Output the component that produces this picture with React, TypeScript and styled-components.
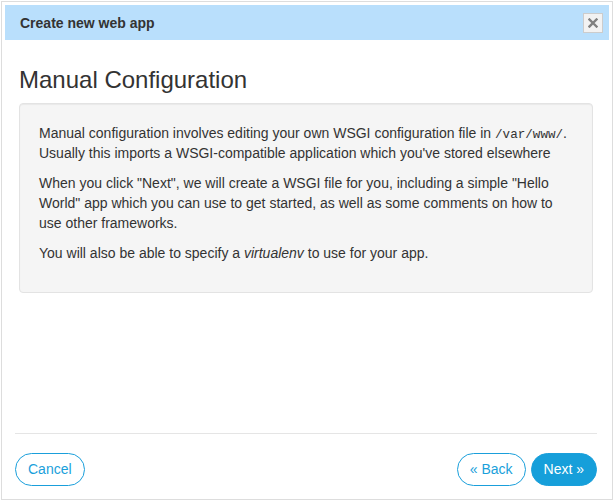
import React from "react";
import styled, { createGlobalStyle } from "styled-components";

const Global = createGlobalStyle`
  html, body { margin: 0; padding: 0; background: #fff; }
  body { font-family: "Liberation Sans", Arial, sans-serif; color: #333; }
  * { box-sizing: border-box; }
`;

const Page = styled.div`
  padding: 1px;
`;

const Dialog = styled.div`
  width: 612px;
  height: 499px;
  border: 1px solid #dddddd;
  padding: 3px;
  display: flex;
  flex-direction: column;
  background: #fff;
`;

const TitleBar = styled.div`
  height: 35px;
  background: #b9dffc;
  display: flex;
  align-items: center;
  justify-content: space-between;
  padding: 0 6px 0 15px;
`;

const Title = styled.span`
  font-size: 14px;
  font-weight: bold;
  color: #333;
`;

const CloseButton = styled.button`
  width: 20px;
  height: 20px;
  padding: 0;
  margin: 0;
  border: 1px solid #cccccc;
  background: #f2f2f2;
  display: flex;
  align-items: center;
  justify-content: center;
  cursor: pointer;
`;

const Content = styled.div`
  flex: 1;
  padding: 7px 16px 0 14px;
`;

const Heading = styled.h3`
  margin: 20px 0 10px;
  font-size: 24px;
  font-weight: normal;
  line-height: 1.1;
  color: #333;
`;

const Well = styled.div`
  background: #f5f5f5;
  border: 1px solid #e3e3e3;
  border-radius: 4px;
  box-shadow: inset 0 1px 1px rgba(0, 0, 0, 0.05);
  padding: 19px;
`;

const Para = styled.p`
  margin: 0 0 10px;
  font-size: 14px;
  line-height: 20px;
  color: #333;
`;

const Code = styled.code`
  font-family: "Liberation Mono", "DejaVu Sans Mono", monospace;
  font-size: 12.6px;
  line-height: 1;
`;

const Footer = styled.div`
  margin: 0 12px 0 10px;
  border-top: 1px solid #e5e5e5;
  padding: 19px 0 10px;
  display: flex;
  justify-content: space-between;
  align-items: center;
`;

const ButtonGroup = styled.div`
  display: flex;
  gap: 5px;
`;

const Button = styled.button<{ $primary?: boolean }>`
  font-family: "Liberation Sans", Arial, sans-serif;
  font-size: 14px;
  line-height: 19px;
  padding: 6px 12px;
  border-radius: 17px;
  border: 1px solid #1a9fdb;
  background: ${(p) => (p.$primary ? "#169fda" : "#ffffff")};
  color: ${(p) => (p.$primary ? "#ffffff" : "#1a9fdb")};
  cursor: pointer;
`;

export default function App() {
  return (
    <>
      <Global />
      <Page>
        <Dialog>
          <TitleBar>
            <Title>Create new web app</Title>
            <CloseButton aria-label="close">
              <svg width="10" height="10" viewBox="0 0 10 10">
                <path
                  d="M1.5 1.5 L8.5 8.5 M8.5 1.5 L1.5 8.5"
                  stroke="#808080"
                  strokeWidth="2.4"
                  strokeLinecap="square"
                />
              </svg>
            </CloseButton>
          </TitleBar>
          <Content>
            <Heading>Manual Configuration</Heading>
            <Well>
              <Para>
                Manual configuration involves editing your own WSGI configuration file in{" "}
                <Code>/var/www/</Code>. Usually this imports a WSGI-compatible application which
                you've stored elsewhere
              </Para>
              <Para>
                When you click "Next", we will create a WSGI file for you, including a simple
                "Hello World" app which you can use to get started, as well as some comments on
                how to use other frameworks.
              </Para>
              <Para>
                You will also be able to specify a <em>virtualenv</em> to use for your app.
              </Para>
            </Well>
          </Content>
          <Footer>
            <Button>Cancel</Button>
            <ButtonGroup>
              <Button>« Back</Button>
              <Button $primary>Next »</Button>
            </ButtonGroup>
          </Footer>
        </Dialog>
      </Page>
    </>
  );
}
